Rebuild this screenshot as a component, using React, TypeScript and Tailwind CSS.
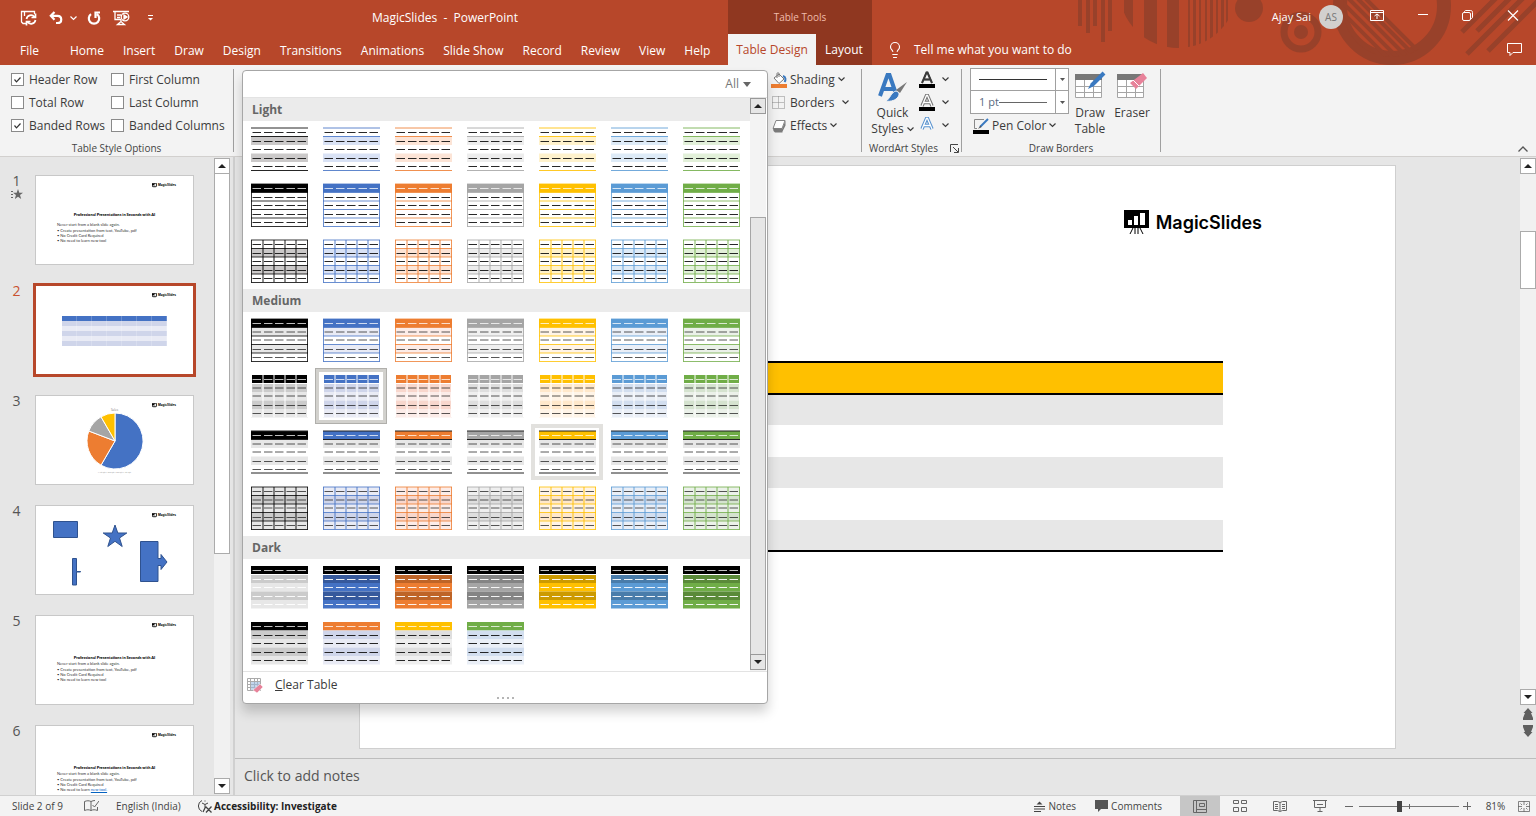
import { useState } from "react";
import type { ReactNode } from "react";
import { Lightbulb } from "lucide-react";

interface Accent {
  name: string;
  base: string;
  tint: string;
  band: string;
  soft: string;
  deep: string;
}

type Kind = "lines" | "list" | "grid" | "boxed" | "tiles" | "ruled" | "cells" | "dark" | "mixed";

const accents: Accent[] = [
  { name: "Black", base: "#000000", tint: "#cbc9c9", band: "#cbcbcb", soft: "#e7e7e7", deep: "#cbcbcb" },
  { name: "Blue", base: "#4472c4", tint: "#d9e2f5", band: "#cfd5ea", soft: "#e9ebf5", deep: "#36599c" },
  { name: "Orange", base: "#ed7d31", tint: "#fce4d6", band: "#f8d7cd", soft: "#fcece8", deep: "#be6427" },
  { name: "Gray", base: "#a5a5a5", tint: "#ededed", band: "#dedede", soft: "#efefef", deep: "#848484" },
  { name: "Gold", base: "#ffc000", tint: "#fff2cc", band: "#ffe8cb", soft: "#fff4e7", deep: "#cc9a00" },
  { name: "Light Blue", base: "#5b9bd5", tint: "#deebf7", band: "#d2deef", soft: "#eaeff7", deep: "#497caa" },
  { name: "Green", base: "#70ad47", tint: "#e2f0d9", band: "#d5e3cf", soft: "#ebf1e9", deep: "#5a8a39" },
];

// Dark Style 2 pairs a header accent with the bands of its neighbour
const mixedAccents: Accent[] = [
  accents[0],
  { ...accents[2], band: "#cfd5ea", soft: "#e9ebf5" },
  { ...accents[4], band: "#dedede", soft: "#efefef" },
  { ...accents[6], band: "#d2deef", soft: "#eaeff7" },
];

const sections: { title: string; rows: { kind: Kind; items: Accent[] }[] }[] = [
  {
    title: "Light",
    rows: [
      { kind: "lines", items: accents },
      { kind: "list", items: accents },
      { kind: "grid", items: accents },
    ],
  },
  {
    title: "Medium",
    rows: [
      { kind: "boxed", items: accents },
      { kind: "tiles", items: accents },
      { kind: "ruled", items: accents },
      { kind: "cells", items: accents },
    ],
  },
  {
    title: "Dark",
    rows: [
      { kind: "dark", items: accents },
      { kind: "mixed", items: mixedAccents },
    ],
  },
];

const rowY = [1, 9.5, 18, 26.5, 35, 43.5];
const colX = [1, 12.5, 23.5, 34.5, 45.5, 57];

const StyleIcon = ({ kind, accent }: { kind: Kind; accent: Accent }) => {
  const isBlack = accent.base === "#000000";
  const filledHeader = !["lines", "grid", "cells"].includes(kind);
  const hasVertical = kind === "grid" || kind === "cells";
  const hasBox = ["list", "grid", "boxed", "cells"].includes(kind);
  const headerFill = kind === "dark" ? "#000000" : kind === "cells" ? accent.soft : accent.base;

  const rowFill = (row: number) => {
    const odd = row % 2 === 1;
    if (kind === "list") return "#ffffff";
    if (kind === "lines" || kind === "grid") return odd ? accent.tint : "#ffffff";
    if (kind === "boxed") return odd ? accent.soft : "#ffffff";
    if (kind === "ruled") return odd ? "#e7e7e7" : "#ffffff";
    if (kind === "dark") return odd ? accent.deep : isBlack ? "#e7e7e7" : accent.base;
    return odd ? accent.band : accent.soft;
  };

  const dash = kind === "dark" ? "#ffffff" : "#111111";
  const soften = ["boxed", "tiles", "ruled", "cells"].includes(kind);

  return (
    <svg width="58" height="44" viewBox="-0.5 0 58 44" aria-hidden="true">
      {rowY.slice(0, 5).map((y, row) => (
        <rect
          key={row}
          x="0.5"
          y={y}
          width="57"
          height={rowY[row + 1] - y}
          fill={row === 0 ? (filledHeader || kind === "cells" ? headerFill : "#ffffff") : rowFill(row)}
        />
      ))}
      {hasBox &&
        rowY.map((y) => (
          <path key={y} d={`M.5 ${y}h57`} stroke={accent.base} strokeOpacity="0.8" />
        ))}
      {hasBox && <path d="M1 1v42.500M57 1v42.500" stroke={accent.base} strokeOpacity="0.8" />}
      {hasVertical &&
        colX.slice(1, 5).map((x) => (
          <path key={x} d={`M${x} 1v42`} stroke={accent.base} strokeOpacity="0.9" />
        ))}
      {kind === "lines" && <path d="M.5 1h57M.5 9.500h57M.5 43.500h57" stroke={accent.base} strokeOpacity="0.85" />}
      {kind === "ruled" && <path d="M.5 1h57M.5 9.500h57M.5 43h57" stroke="#222222" />}
      {kind === "dark" && <path d="M0 9.500h58" stroke="#ffffff" />}
      {kind === "tiles" && (
        <>
          <path d="M0 9.500h58" stroke="#ffffff" />
          {colX.map((x) => (
            <path key={x} d={`M${x} 1v42`} stroke="#ffffff" />
          ))}
        </>
      )}
      {[5.5, 14.5, 22.5, 31.5, 39.5].map((y, row) => {
        // medium styles print their first two data rows lighter
        const faded = soften && (row === 1 || row === 2);
        const lineY = faded ? y - 0.5 : y;
        return (
          <path
            key={y}
            d={`M2 ${lineY}h8.500M13.500 ${lineY}h8.500M24.500 ${lineY}h8.500M36 ${lineY}h8.500M47 ${lineY}h8.500`}
            stroke={row === 0 && filledHeader ? "#ffffff" : dash}
            strokeOpacity={row === 0 && filledHeader ? 0.75 : soften ? 0.7 : 0.9}
          />
        );
      })}
    </svg>
  );
};

const Chevron = () => (
  <svg width="7" height="5" viewBox="0 0 7 5" fill="none" stroke="currentColor" strokeWidth="1.2" aria-hidden="true">
    <path d="M.5.5l3 3 3-3" />
  </svg>
);

const Triangle = ({ up = false }: { up?: boolean }) => (
  <svg width="8" height="4" viewBox="0 0 8 4" fill="#222" aria-hidden="true">
    <path d={up ? "M4 0l4 4H0z" : "M4 4l4-4H0z"} />
  </svg>
);

const ScrollButton = ({ up = false, label }: { up?: boolean; label: string }) => (
  <button
    aria-label={label}
    className="flex h-4 w-full shrink-0 items-center justify-center border border-[#ababab] bg-white"
  >
    <Triangle up={up} />
  </button>
);

const LogoMark = ({ className }: { className: string }) => (
  <svg viewBox="0 0 26 26" className={className} aria-hidden="true">
    <path d="M0 1h25v18H0z" fill="#000" />
    <path d="M4 11h4v5H4zM10 7h4v9h-4zM16 4h5v12h-5z" fill="#fff" />
    <path d="M9 19l-3 6M11 19v6M14 19v6M16 19l3 6" stroke="#000" fill="none" />
  </svg>
);

const HeaderArt = () => (
  <svg
    className="pointer-events-none absolute top-0 right-0"
    width="464"
    height="65"
    viewBox="1072 0 464 65"
    fill="#98412a"
    aria-hidden="true"
  >
    <defs>
      <clipPath id="half">
        <circle cx="1178" cy="-11" r="59" />
      </clipPath>
      <clipPath id="disc">
        <circle cx="1392" cy="8" r="49" />
      </clipPath>
    </defs>
    <path d="M1078 0h4v26h-4zM1086 0h4v33h-4zM1093 0h4v26h-4zM1101 0h4v42h-4zM1108 0h4v31h-4z" />
    <g clipPath="url(#half)">
      <path d="M1124 0h9v65h-9zM1144 0h13v65h-13zM1167 0h12v65h-12zM1188 0h2v65h-2zM1193 0h3v65h-3zM1199 0h2v65h-2zM1205 0h2v65h-2zM1210 0h3v65h-3zM1216 0h2v65h-2zM1221 0h3v65h-3zM1226 0h2v65h-2z" />
    </g>
    <circle cx="1249" cy="8" r="14" />
    <circle cx="1301" cy="32" r="17" fill="none" stroke="#98412a" strokeWidth="7" />
    <circle cx="1301" cy="32" r="7" />
    <circle cx="1392" cy="6" r="52" fill="none" stroke="#98412a" strokeWidth="14" />
    <g clipPath="url(#disc)" fill="none" stroke="#98412a">
      <path d="M1340 22l40 40" strokeWidth="5" />
      <path d="M1341 11l50 50M1341 1l60 60M1341 -9l70 70M1345 -14l72 72M1353 -14l70 70" strokeWidth="4" />
    </g>
    <path
      d="M1462 32l34-34M1477 31l33-33M1467 54l56-56M1488 51l50-50"
      fill="none"
      stroke="#98412a"
      strokeWidth="5"
    />
  </svg>
);

const tabs = ["Home", "Insert", "Draw", "Design", "Transitions", "Animations", "Slide Show", "Record", "Review", "View", "Help"];

const TitleBar = () => (
  <header className="relative flex h-[65px] shrink-0 bg-[#b7472a] text-white">
    <HeaderArt />
    <div className="flex w-[728px] shrink-0 flex-col">
      <div className="flex h-9 items-center">
        <div className="flex w-[162px] shrink-0 items-center pl-5">
          <button aria-label="Save" className="mr-3">
            <svg width="17" height="16" viewBox="0 0 17 16" fill="none" stroke="#fff" strokeWidth="1.3">
              <path d="M6 13.500H3L1.500 12V1.500h13V4M4.500 1.500V6" />
              <path d="M6.500 9a4.500 4.500 0 018-2M15.500 3.500V7.500h-4M15.500 10a4.500 4.500 0 01-8 2M6.500 15.500V11.500h4" strokeWidth="1.7" />
            </svg>
          </button>
          <button aria-label="Undo" className="mr-[7px]">
            <svg width="14" height="14" viewBox="0 0 14 14" fill="none" stroke="#fff" strokeWidth="2.200">
              <path d="M5.500 1L1.800 4.800l3.700 4M2 4.800h6.500c5 0 5 7.200 0 7.200H7" />
            </svg>
          </button>
          <button aria-label="Undo history" className="mr-[10px]">
            <Chevron />
          </button>
          <button aria-label="Redo" className="mr-3">
            <svg width="14" height="15" viewBox="0 0 14 15" fill="none" stroke="#fff" strokeWidth="2.200">
              <path d="M4 3.200a5.200 5.200 0 106 0M13 1.500H8.500V7" />
            </svg>
          </button>
          <button aria-label="Start slide show" className="mr-[18px]">
            <svg width="17" height="16" viewBox="0 0 17 16" fill="none" stroke="#fff" strokeWidth="1.300">
              <path d="M0 1.500h16M2 2v7.500h6M4 5h4M4 7.500h3M8 10v2M4.500 14.500l3.500-3 3.500 3z" />
              <circle cx="12" cy="7" r="3.800" />
              <path d="M11 5l3 2-3 2z" fill="#fff" />
            </svg>
          </button>
          <button aria-label="Customize toolbar">
            <svg width="5" height="6" viewBox="0 0 5 6" fill="#fff">
              <path d="M0 0h5v1H0zM0 3h5L2.500 5.500z" />
            </svg>
          </button>
        </div>
        <h1 className="flex-1 text-center text-[12px] whitespace-pre">MagicSlides  -  PowerPoint</h1>
      </div>
      <nav className="flex flex-1 items-center gap-[19px] pl-5 text-[12px]">
        <button className="mr-3">File</button>
        {tabs.map((tab) => (
          <button key={tab} className="whitespace-nowrap">
            {tab}
          </button>
        ))}
      </nav>
    </div>
    <div className="flex w-[144px] shrink-0 flex-col bg-[#8f3720]">
      <div className="flex h-[34px] items-center justify-center text-[10px] text-[#f0bcab]">Table Tools</div>
      <div className="flex flex-1 text-[12px]">
        <button className="w-[88px] bg-[#f3f3f3] text-[#b7472a]">Table Design</button>
        <button className="flex-1">Layout</button>
      </div>
    </div>
    <div className="relative flex min-w-0 flex-1 flex-col">
      <div className="flex h-[34px] items-center justify-end pr-[17px] text-[11px]">
        <span>Ajay Sai</span>
        <span className="mr-[27px] ml-2 flex size-6 items-center justify-center rounded-full bg-[#d2d0ce] text-[10px] text-[#777]">
          AS
        </span>
        <button aria-label="Ribbon display options" className="mr-[34px] mb-1">
          <svg width="14" height="11" viewBox="0 0 14 11" fill="none" stroke="#fff">
            <path d="M.5.5h13v10H.5zM.5 2.500h13M7 9V4M4.500 6L7 4l2.500 2" />
          </svg>
        </button>
        <button aria-label="Minimize" className="mr-[34px] mb-1">
          <svg width="10" height="10" viewBox="0 0 10 10" stroke="#fff">
            <path d="M0 4.500h10" />
          </svg>
        </button>
        <button aria-label="Restore" className="mr-[34px] mb-1">
          <svg width="11" height="11" viewBox="0 0 11 11" fill="none" stroke="#fff">
            <rect x=".5" y="2.500" width="8" height="8" rx="1.500" />
            <path d="M2.500 2.500V2C2.500 1 3 .5 4 .5h4.500c1.300 0 2 .7 2 2V7c0 1-.5 1.500-1.500 1.500" />
          </svg>
        </button>
        <button aria-label="Close" className="mb-1">
          <svg width="12" height="11" viewBox="0 0 12 11" stroke="#fff" strokeWidth="1.200">
            <path d="M1 .5l10 10M11 .5l-10 10" />
          </svg>
        </button>
      </div>
      <div className="flex flex-1 items-center justify-between px-[14px] text-[12px]">
        <button className="flex items-center gap-[10px]">
          <Lightbulb size={18} strokeWidth={1.5} />
          Tell me what you want to do
        </button>
        <button aria-label="Comments pane">
          <svg width="15" height="14" viewBox="0 0 15 14" fill="none" stroke="#fff">
            <path d="M.5.5h14v9H6l-3 3v-3H.5z" />
          </svg>
        </button>
      </div>
    </div>
  </header>
);

const Option = ({ label, on = false }: { label: string; on?: boolean }) => {
  const [checked, setChecked] = useState(on);
  return (
    <label className="flex h-[23px] items-center gap-[5px] whitespace-nowrap">
      <span className="relative flex size-[13px]">
        <input
          type="checkbox"
          checked={checked}
          onChange={() => setChecked(!checked)}
          className="size-[13px] appearance-none border border-[#8a8a8a] bg-white"
        />
        {checked && (
          <svg className="pointer-events-none absolute inset-0" width="13" height="13" fill="none" stroke="#333" strokeWidth="1.200">
            <path d="M3.500 6.500l2 2.300 4-4.300" />
          </svg>
        )}
      </span>
      {label}
    </label>
  );
};

const Group = ({ label, className, children }: { label: ReactNode; className: string; children: ReactNode }) => (
  <section className={`flex shrink-0 flex-col ${className}`}>
    <div className="h-[74px]">{children}</div>
    <div className="flex h-4 items-center justify-center text-[10px] text-[#444]">{label}</div>
  </section>
);

const Separator = () => <div className="my-1 w-px shrink-0 bg-[#a0a0a0]" />;

const TableGrid = ({ children }: { children: ReactNode }) => (
  <svg width="32" height="30" viewBox="0 0 32 30" aria-hidden="true">
    <path d="M1.500 5.500h26v22h-26z" fill="#fff" stroke="#a5a5a5" />
    <path d="M1 4h27v6H1z" fill="#777" />
    <path d="M2 16.500h25M2 22.500h25M10.500 10v17M19.500 10v17" stroke="#a5a5a5" />
    {children}
  </svg>
);

const LetterButton = ({ label, fill, stroke, bar }: { label: string; fill: string; stroke: string; bar?: string }) => (
  <button aria-label={label} className="flex h-[23px] items-center gap-[7px]">
    <svg width="16" height="17" viewBox="0 0 16 17" aria-hidden="true">
      <path d="M3 12L7.500 1.500h1L13 12M5 8.500h6" fill="none" stroke={stroke} strokeWidth={bar && fill === stroke ? 2 : 3.4} />
      <path d="M3 12L7.500 1.500h1L13 12M5 8.500h6" fill="none" stroke={fill} strokeWidth="1.300" />
      {bar && <path d="M0 13h16v4H0z" fill={bar} />}
    </svg>
    <Chevron />
  </button>
);

const Ribbon = () => (
  <div className="relative flex h-[92px] shrink-0 border-b border-[#d2d0ce] bg-[#f3f3f3] text-[12px] text-[#3b3b3b]">
    <Group label="Table Style Options" className="w-[233px] pt-[3px]">
      <div className="grid grid-cols-[100px_1fr] pl-[11px]">
        <Option label="Header Row" on />
        <Option label="First Column" />
        <Option label="Total Row" />
        <Option label="Last Column" />
        <Option label="Banded Rows" on />
        <Option label="Banded Columns" />
      </div>
    </Group>
    <Separator />
    <div className="relative w-[534px] shrink-0">
      <StyleGallery />
    </div>
    <div className="flex w-[93px] shrink-0 flex-col items-start pt-[3px] pl-[3px]">
      <button className="flex h-[23px] items-center gap-[3px]">
        <svg width="16" height="16" viewBox="0 0 16 16" fill="none">
          <path d="M3 6l5-4 5 5-5 4.500z" fill="#fff" stroke="#777" />
          <path d="M6 6V1.500C6 .5 8 .5 8 1.500V5" stroke="#777" />
          <path d="M12 4c3 1 3 4 1.500 6" stroke="#3a79c0" strokeWidth="2" />
          <path d="M0 12h16v4H0z" fill="#ed7d31" />
        </svg>
        Shading
        <Chevron />
      </button>
      <button className="flex h-[23px] items-center gap-[3px]">
        <svg width="16" height="16" viewBox="0 0 16 16" fill="none" stroke="#888">
          <path d="M1.500 1.500h12v12h-12zM7.500 1.500v12M1.500 7.500h12" strokeDasharray="1 1" />
        </svg>
        Borders
        <span className="ml-1">
          <Chevron />
        </span>
      </button>
      <button className="flex h-[23px] items-center gap-[3px]">
        <svg width="16" height="16" viewBox="0 0 16 16">
          <path d="M5 2.500h9l-3 8H2z" fill="#fff" stroke="#888" />
          <path d="M14.500 2.500v5l-3 6V10zM2 10.500h9.500v4H4q-2-1-2-4z" fill="#7b7b7b" />
        </svg>
        Effects
        <Chevron />
      </button>
    </div>
    <Separator />
    <Group
      className="w-[99px] pt-[3px]"
      label={
        <div className="flex w-full items-center justify-between pr-[2px] pl-[7px]">
          <span className="whitespace-nowrap">WordArt Styles</span>
          <button aria-label="WordArt dialog">
            <svg width="9" height="9" viewBox="0 0 9 9" fill="none" stroke="#444">
              <path d="M8 .5H.5V8M3 3l5 5M8.500 4v4.500H4" />
            </svg>
          </button>
        </div>
      }
    >
      <div className="flex">
        <button className="flex w-[57px] flex-col items-center pt-1 pl-1 leading-4">
          <svg width="30" height="33" viewBox="0 0 30 33" fill="none">
            <path d="M2 24L9.500 3h2L18 22M5 17h11" stroke="#3a79c0" strokeWidth="4" />
            <path d="M29 10l-7 11-4-3z" fill="#777" />
            <path d="M18 19c3 1 4 3 2 6s-7 5-12 4c4-2 5-9 10-10z" fill="#3a79c0" stroke="#f3f3f3" />
          </svg>
          <span>Quick</span>
          <span className="flex items-center gap-[3px]">
            Styles
            <Chevron />
          </span>
        </button>
        <div className="flex flex-col">
          <LetterButton label="Text fill" fill="#3b3b3b" stroke="#3b3b3b" bar="#000" />
          <LetterButton label="Text outline" fill="#ffffff" stroke="#777" bar="#000" />
          <LetterButton label="Text effects" fill="#ffffff" stroke="#5a94d0" />
        </div>
      </div>
    </Group>
    <Separator />
    <Group label="Draw Borders" className="w-[198px] pt-[3px]">
      <div className="flex pl-2">
        <div className="w-[99px]">
          <div className="relative flex h-[23px] border border-[#a0a0a0] bg-white">
            <select aria-label="Pen style" className="w-full appearance-none">
              <option></option>
            </select>
            <span className="pointer-events-none absolute top-[10px] left-2 h-px w-[68px] bg-[#333]" />
            <span className="pointer-events-none absolute inset-y-0 right-0 flex w-[13px] items-center justify-center border-l border-[#a0a0a0]">
              <svg width="5" height="3" viewBox="0 0 5 3" fill="#555"><path d="M0 0h5L2.500 3z" /></svg>
            </span>
          </div>
          <div className="relative flex h-[23px] border border-t-0 border-[#a0a0a0] bg-white">
            <select aria-label="Pen weight" className="w-full appearance-none pl-2 text-[11px] text-[#5a6b80]">
              <option>1 pt</option>
            </select>
            <span className="pointer-events-none absolute top-[11px] left-[28px] h-px w-12 bg-[#666]" />
            <span className="pointer-events-none absolute inset-y-0 right-0 flex w-[13px] items-center justify-center border-l border-[#a0a0a0]">
              <svg width="5" height="3" viewBox="0 0 5 3" fill="#555"><path d="M0 0h5L2.500 3z" /></svg>
            </span>
          </div>
          <button className="flex h-[23px] items-center gap-[3px] pl-[3px] whitespace-nowrap">
            <svg width="16" height="16" viewBox="0 0 16 16" fill="none">
              <path d="M11 1.500H1.500v9H4" stroke="#888" />
              <path d="M15 1L7 9" stroke="#3a79c0" strokeWidth="2" />
              <path d="M7.500 7.500L5 11l3.500-2z" fill="#555" />
              <path d="M0 12h16v4H0z" fill="#000" />
            </svg>
            Pen Color
            <Chevron />
          </button>
        </div>
        <button className="flex w-[42px] flex-col items-center pt-[2px] leading-4">
          <TableGrid>
            <path d="M30 3L18 15" stroke="#3a79c0" strokeWidth="4" />
            <path d="M17 13l-3 6 6-3z" fill="#3a79c0" />
          </TableGrid>
          <span className="pt-[5px]">Draw</span>
          <span>Table</span>
        </button>
        <button className="flex w-[42px] flex-col items-center pt-[2px] leading-4">
          <TableGrid>
            <path d="M27 3l4 5-11 11-6-6z" fill="#e8829a" />
            <path d="M17 10l6 6" stroke="#fff" />
          </TableGrid>
          <span className="pt-[5px]">Eraser</span>
        </button>
      </div>
    </Group>
    <Separator />
    <button aria-label="Collapse ribbon" className="mt-auto mr-2 mb-1 ml-auto">
      <svg width="10" height="6" viewBox="0 0 10 6" fill="none" stroke="#555" strokeWidth="1.300">
        <path d="M.5 5.500L5 1l4.500 4.500" />
      </svg>
    </button>
  </div>
);

const StyleGallery = () => {
  const [picked, setPicked] = useState("tiles-Blue");
  const hovered = "ruled-Gold";

  return (
    <div className="absolute top-[5px] left-2 z-20 w-[526px] rounded border border-[#a6a6a6] bg-white shadow-[0_8px_12px_rgba(0,0,0,0.18)]">
      <div className="flex h-[26px] items-center justify-end pr-4 text-[#777]">
        <button className="flex items-center gap-1">
          All
          <svg width="8" height="5" viewBox="0 0 8 5" fill="#666"><path d="M0 0h8L4 5z" /></svg>
        </button>
      </div>
      <div className="flex border-t border-[#e3e3e3]">
        <div className="flex-1">
          {sections.map((section) => (
            <div key={section.title}>
              <h2 className="flex h-[23px] items-center bg-[#ebebeb] pl-[9px] text-[12px] font-bold text-[#666]">{section.title}</h2>
              {section.rows.map(({ kind, items }) => (
                <div key={kind} className="flex">
                  {items.map((accent) => {
                    const id = `${kind}-${accent.name}`;
                    return (
                      <button
                        key={id}
                        aria-label={`${section.title} style, ${accent.name}`}
                        onClick={() => setPicked(id)}
                        className={`flex h-14 w-[72px] items-center justify-center ${
                          picked === id
                            ? "border border-[#b0afab] shadow-[inset_0_0_0_3px_#d2d1cd]"
                            : hovered === id
                              ? "border-4 border-[#e2e1de]"
                              : ""
                        }`}
                      >
                        <StyleIcon kind={kind} accent={accent} />
                      </button>
                    );
                  })}
                </div>
              ))}
            </div>
          ))}
        </div>
        <div className="mr-px flex w-4 flex-col bg-[#f3f3f3]">
          <button aria-label="Scroll styles up" className="flex h-4 items-center justify-center border border-[#999] bg-[#e6e6e6]">
            <Triangle up />
          </button>
          <div className="h-[103px]" />
          <div className="flex-1 border border-b-0 border-[#a6a6a6] bg-[#e6e6e6]" />
          <button aria-label="Scroll styles down" className="mb-px flex h-4 items-center justify-center border border-[#999] bg-[#e6e6e6]">
            <Triangle />
          </button>
        </div>
      </div>
      <div className="h-8 border-t border-[#e3e3e3]">
        <button className="flex h-[25px] items-center gap-3 pl-1">
          <svg width="16" height="16" viewBox="0 0 16 16">
            <path d="M.5 1.500h13v12H.5zM.5 4.500h13M.5 7.500h13M.5 10.500h13M3.500 1.500v12M7.500 1.500v12M10.500 1.500v12" fill="#fff" stroke="#aaa" />
            <path d="M4 5h9v8H4z" fill="#9dbce0" fillOpacity=".6" />
            <path d="M13 7l3 3-6 6-4-3z" fill="#e8829a" stroke="#fff" strokeWidth=".5" />
          </svg>
          <span>
            <u>C</u>lear Table
          </span>
        </button>
        <svg className="mx-auto" width="18" height="3" viewBox="0 0 18 3" fill="#b5b5b5">
          <path d="M1 0h2v2H1zM6 0h2v2H6zM11 0h2v2h-2zM16 0h2v2h-2z" />
        </svg>
      </div>
    </div>
  );
};

const TextSlide = ({ low = false, link = false }: { low?: boolean; link?: boolean }) => (
  <div className={`pl-[21px] font-[Lato] text-[4px] leading-[5px] text-[#333] ${low ? "pt-[27px]" : "pt-6"}`}>
    <p className="pr-[21px] text-center font-black whitespace-nowrap text-black">
      Professional Presentations in Seconds with AI
    </p>
    <p className={low ? "pt-px" : "pt-[5px]"}>Never start from a blank slide again.</p>
    <ul className="pt-px leading-[5px]">
      <li>• Create presentation from text, YouTube, pdf</li>
      <li>• No Credit Card Required</li>
      <li>
        • No need to learn {link ? <span className="text-[#0563c1] underline">new tool.</span> : "new tool"}
      </li>
    </ul>
  </div>
);

const MiniTable = () => (
  <table className="mt-[18px] ml-[26px] w-[105px] table-fixed border-collapse">
    <tbody>
      {["bg-[#4472c4]", "bg-[#cfd5ea]", "bg-[#e9ebf5]", "bg-[#cfd5ea]", "bg-[#e9ebf5]", "bg-[#cfd5ea]"].map((tone, row) => (
        <tr key={row} className={tone}>
          {[0, 1, 2, 3, 4, 5, 6].map((col) => (
            <td key={col} className="h-[5px] border-r border-white/20 p-0" />
          ))}
        </tr>
      ))}
    </tbody>
  </table>
);

const PieSlide = () => (
  <div className="flex flex-col items-center text-[3px] leading-[4px] text-[#777]">
    <span>Sales</span>
    <svg width="58" height="58" viewBox="-29 -29 58 58" stroke="#fff">
      <path d="M0 0V-28A28 28 0 11-14 24.200z" fill="#4472c4" />
      <path d="M0 0L-14 24.200A28 28 0 01-26.200-10z" fill="#ed7d31" />
      <path d="M0 0L-26.200-10A28 28 0 01-14-24.200z" fill="#a5a5a5" />
      <path d="M0 0L-14-24.200A28 28 0 010-28z" fill="#ffc000" />
    </svg>
    <span className="font-[Lato] text-[2px] text-[#999]">▪ 1st Qtr ▪ 2nd Qtr ▪ 3rd Qtr ▪ 4th Qtr</span>
  </div>
);

const ShapesSlide = () => (
  <svg className="absolute inset-0" width="157" height="88" viewBox="0 0 157 88" fill="#4472c4" stroke="#2f528f">
    <path d="M17.500 15.500h24v16h-24z" />
    <path d="M79 19l2.800 8h9l-7.300 5 2.700 8.500-7.200-5.200-7.200 5.200 2.700-8.500-7.300-5h9z" />
    <path d="M36.500 52.500h4v13h4v.5h-4v13h-4z" />
    <path d="M104.500 35.500h17.500v17h3v-4l6 7.500-6 7.500v-4h-3v16h-17.500z" />
  </svg>
);

const slides: ReactNode[] = [
  <TextSlide />,
  <MiniTable />,
  <PieSlide />,
  <ShapesSlide />,
  <TextSlide low />,
  <TextSlide low link />,
];

const SlidePanel = () => {
  const [current, setCurrent] = useState(1);
  return (
    <aside className="flex w-[235px] shrink-0 border-r-2 border-[#d0d0d0]">
      <ol className="flex h-full w-[214px] flex-col gap-4 overflow-hidden pt-4">
        {slides.map((slide, index) => (
          <li key={index} className="flex shrink-0">
            <div className={`flex w-[33px] flex-col items-center text-[14px] leading-4 ${index === current ? "text-[#c9512f]" : "text-[#555]"}`}>
              {index + 1}
              {index === 0 && (
                <svg width="12" height="11" viewBox="0 0 12 11" fill="#666">
                  <path d="M7 0l1.300 3.700H12L9 6l1.200 4L7 7.700 3.800 10 5 6 2 3.700h3.700zM0 2h2v1H0zM0 5h2v1H0zM0 8h2v1H0z" />
                </svg>
              )}
            </div>
            <button
              aria-label={`Slide ${index + 1}`}
              onClick={() => setCurrent(index)}
              className={`border-2 text-left ${index === current ? "border-[#b7472a]" : "border-transparent"}`}
            >
              <div
                className={`relative h-[90px] w-[159px] overflow-hidden border bg-white ${
                  index === current ? "border-[#b7472a]" : "border-[#c8c8c8]"
                }`}
              >
                <div className="flex h-3 items-end gap-px pl-[116px] font-[Inter] text-[3px] leading-[5px] font-bold">
                  <LogoMark className="size-[5px]" />
                  MagicSlides
                </div>
                {slide}
              </div>
            </button>
          </li>
        ))}
      </ol>
      <div className="mt-px mb-px flex w-4 flex-col bg-[#f1f1f1]">
        <ScrollButton up label="Scroll slides up" />
        <div className="h-[380px] border border-t-0 border-[#ababab] bg-white" />
        <div className="flex-1" />
        <ScrollButton label="Scroll slides down" />
      </div>
    </aside>
  );
};

const Editor = () => (
  <main className="flex min-w-0 flex-1 flex-col">
    <div className="flex min-h-0 flex-1 border-b border-[#bdbdbd]">
      <div className="flex flex-1 px-[124px] pt-2 pb-[9px]">
        <div className="flex-1 border border-[#cfcfcf] bg-white">
          <div className="flex h-[112px] items-center justify-end gap-[6px] pr-[133px] font-[Inter] text-[18px] font-semibold text-black">
            <LogoMark className="size-[26px]" />
            MagicSlides
          </div>
          <table className="mx-auto mt-[83px] h-[191px] w-2/3 table-fixed border-collapse border-y-2 border-black">
            <thead>
              <tr className="h-8 border-b-2 border-black bg-[#ffc000]">
                {[0, 1, 2, 3, 4, 5, 6].map((col) => (
                  <th key={col} />
                ))}
              </tr>
            </thead>
            <tbody>
              {[0, 1, 2, 3, 4].map((row) => (
                <tr key={row} className="h-[31px] odd:bg-[#e7e7e7]">
                  {[0, 1, 2, 3, 4, 5, 6].map((col) => (
                    <td key={col} />
                  ))}
                </tr>
              ))}
            </tbody>
          </table>
        </div>
      </div>
      <div className="flex w-4 flex-col pt-px">
        <ScrollButton up label="Previous line" />
        <div className="flex flex-1 flex-col bg-[#f1f1f1] pt-[57px]">
          <div className="h-[58px] border border-[#ababab] bg-white" />
        </div>
        <ScrollButton label="Next line" />
        <div className="flex h-[53px] flex-col items-center gap-[5px] pt-[3px]">
          <button aria-label="Previous slide" className="flex">
            <svg width="10" height="12" viewBox="0 0 10 12" fill="#5f5f5f"><path d="M5 0l4.500 5H8l2 5v2H0v-2l2-5H.5z" /></svg>
          </button>
          <button aria-label="Next slide" className="flex">
            <svg width="10" height="12" viewBox="0 0 10 12" fill="#5f5f5f"><path d="M5 12l4.500-5H8l2-5V0H0v2l2 5H.5z" /></svg>
          </button>
        </div>
      </div>
    </div>
    <div className="flex h-9 shrink-0 items-center pl-[9px] text-[14px] text-[#555]">
      <span className="pb-1">Click to add notes</span>
    </div>
  </main>
);

const StatusBar = () => {
  const [zoom, setZoom] = useState(81);
  return (
    <footer className="flex h-[21px] shrink-0 items-center border-t border-[#d0d0d0] bg-[#f3f3f3] pl-3 text-[10px] whitespace-nowrap text-[#444]">
      <span className="w-[72px]">Slide 2 of 9</span>
      <button aria-label="Spelling" className="w-8">
        <svg width="15" height="12" viewBox="0 0 15 12" fill="none" stroke="#666">
          <path d="M7 1.500C5 .5 3 .5.500 1.500v9c2.500-1 4.500-1 6.500 0zM7 1.500c1-.6 3-1 4-1M7 10.500c2-1 4-1 6.500 0V7M8.500 5l2 2L15 1" />
        </svg>
      </button>
      <button className="w-[81px] text-left">English (India)</button>
      <button className="flex items-center gap-[2px] font-bold text-[#222]">
        <svg width="15" height="14" viewBox="0 0 15 14" fill="none" stroke="#444">
          <path d="M5 1.500a6 6 0 000 11M5 4l3 1.500L11 4M8 5.500v3M8 1.500v1" />
          <path d="M6 13l2.500-5M8.500 7.500l6 6M14.500 7.500l-5.500 6" strokeWidth="1.300" />
        </svg>
        Accessibility: Investigate
      </button>
      <div className="ml-auto flex h-full items-center">
        <button className="mr-[18px] flex items-center gap-1">
          <svg width="11" height="11" viewBox="0 0 11 11" fill="#444"><path d="M2.500 3.500h6L5.500.5zM0 5h11v1H0zM0 7.500h11v1H0zM0 10h7v1H0z" /></svg>
          Notes
        </button>
        <button className="mr-[18px] flex items-center gap-[2px]">
          <svg width="15" height="12" viewBox="0 0 15 12" fill="#555"><path d="M1 0h13v9H7l-3 3V9H1z" /></svg>
          Comments
        </button>
        <button aria-label="Normal view" className="flex h-full w-10 items-center justify-center bg-[#c6c6c6]">
          <svg width="14" height="13" viewBox="0 0 14 13" fill="none" stroke="#666"><path d="M.5.5h13v12H.5zM3.500.5v12M3.500 9.500h10M6.500 3.500h5v3h-5z" /></svg>
        </button>
        <button aria-label="Slide sorter" className="flex w-10 justify-center">
          <svg width="14" height="12" viewBox="0 0 14 12" fill="none" stroke="#666"><path d="M.5.5h5v3h-5zM8.500.5h5v3h-5zM.5 7.500h5v4h-5zM8.500 7.500h5v4h-5z" /></svg>
        </button>
        <button aria-label="Reading view" className="flex w-10 justify-center">
          <svg width="14" height="12" viewBox="0 0 14 12" fill="none" stroke="#666"><path d="M.5 1.500h4l2.500 1 2.500-1h4v9h-4l-2.500 1-2.500-1h-4zM7 2v9M2 4.500h3M2 6.500h3M2 8.500h3M9 4.500h3M9 6.500h3M9 8.500h3" /></svg>
        </button>
        <button aria-label="Slide show view" className="flex w-10 justify-center">
          <svg width="14" height="12" viewBox="0 0 14 12" fill="none" stroke="#666"><path d="M0 .5h14M1.500 1v6.500h11V1M4 4.500h6M7 8v3.500M4.500 11.500h5" /></svg>
        </button>
        <button aria-label="Zoom out" className="ml-[5px] w-[10px]">
          <svg width="8" height="8" viewBox="0 0 8 8" stroke="#666"><path d="M0 4.500h8" /></svg>
        </button>
        <div className="relative ml-1 flex h-full w-[100px] items-center">
          <span className="absolute top-[10px] h-px w-full bg-[#777]" />
          <span className="absolute left-1/2 h-[5px] w-px bg-[#666]" />
          <input
            type="range"
            aria-label="Zoom"
            min="0"
            max="200"
            value={zoom}
            onChange={(e) => setZoom(Number(e.target.value))}
            className="relative w-full appearance-none bg-transparent [&::-webkit-slider-thumb]:h-[11px] [&::-webkit-slider-thumb]:w-[5px] [&::-webkit-slider-thumb]:appearance-none [&::-webkit-slider-thumb]:bg-[#444]"
          />
        </div>
        <button aria-label="Zoom in" className="ml-1 w-[10px]">
          <svg width="8" height="8" viewBox="0 0 8 8" stroke="#666"><path d="M0 4.500h8M4.500 0v8" /></svg>
        </button>
        <button className="w-[45px]">{zoom}%</button>
        <button aria-label="Fit slide to window" className="mr-[6px]">
          <svg width="12" height="11" viewBox="0 0 12 11" fill="none" stroke="#666"><path d="M.5.5h11v10H.5zM6 0v4M6 7v4M0 5.500h4M8 5.500h4M2.500 2.500l1.500 1.500M9.500 2.500L8 4M2.500 8.500L4 7M9.500 8.500L8 7" strokeWidth=".8" /></svg>
        </button>
      </div>
    </footer>
  );
};

const App = () => {
  return (
    <div className="flex h-screen flex-col overflow-hidden bg-[#e6e6e6] font-['Open_Sans','Noto_Sans',sans-serif]">
      <TitleBar />
      <Ribbon />
      <div className="flex min-h-0 flex-1">
        <SlidePanel />
        <Editor />
      </div>
      <StatusBar />
    </div>
  );
};

export default App;
